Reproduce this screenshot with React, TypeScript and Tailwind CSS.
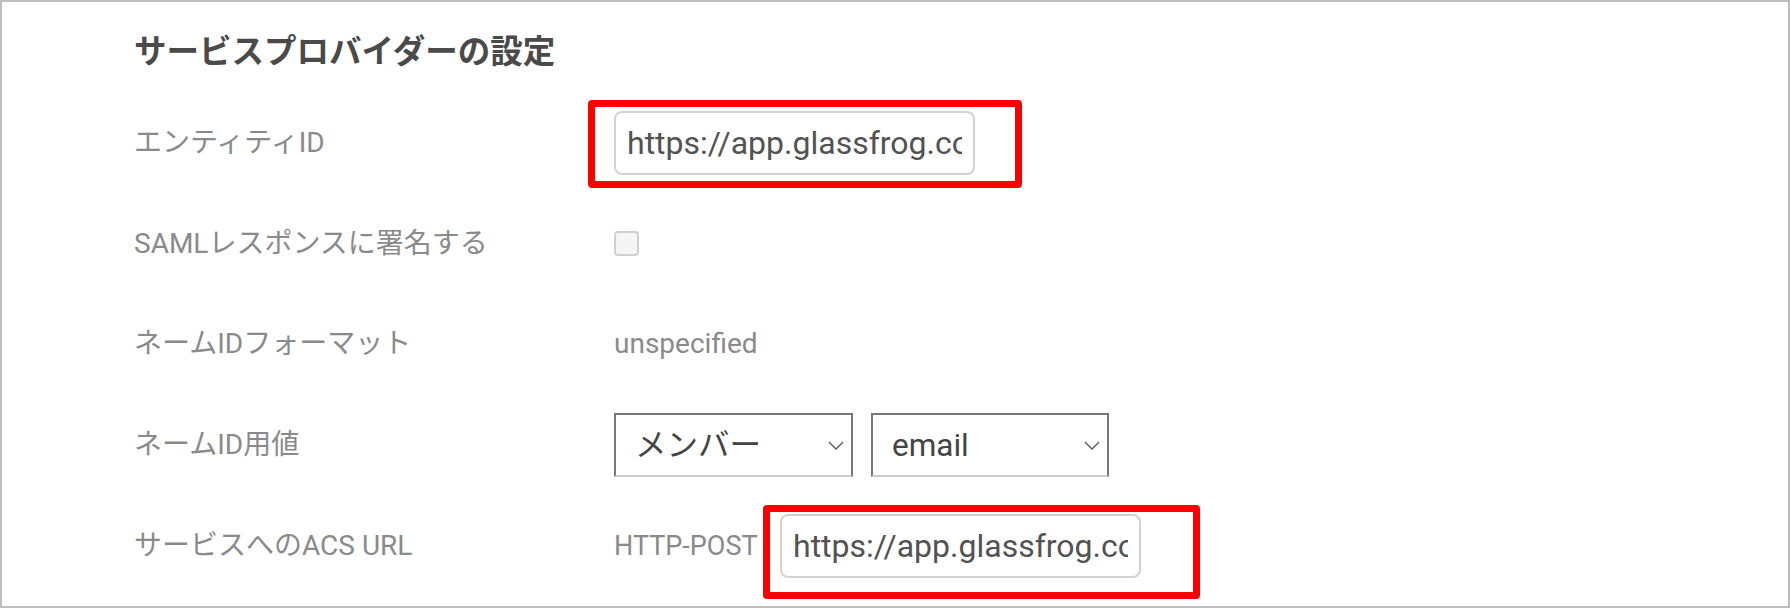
import React from "react";

const Chevron = () => (
  <svg width="16" height="9" viewBox="0 0 16 9" fill="none">
    <path d="M1 1 L8 8 L15 1" stroke="#555" strokeWidth="1.3" />
  </svg>
);

function Row({ label, children }: { label: string; children: React.ReactNode }) {
  return (
    <div className="flex h-[100.75px] items-center">
      <div className="w-[480px] text-[28px] leading-[36px] text-[#8a8a8a]">{label}</div>
      <div className="flex items-center">{children}</div>
    </div>
  );
}

function UrlInput() {
  return (
    <input
      readOnly
      value="https://app.glassfrog.com/saml/metadata"
      className="h-[64px] w-[361px] rounded-[8px] border-2 border-[#d2d2d2] bg-white px-[11px] text-[32px] text-[#525252] outline-none"
    />
  );
}

function Select({ text, width }: { text: string; width: string }) {
  return (
    <div
      className={`flex h-[64px] ${width} items-center justify-between border-2 border-[#787878] border-b-[#cccccc] pl-[19px] pr-[7px] text-[31.5px] text-[#444]`}
    >
      <span>{text}</span>
      <Chevron />
    </div>
  );
}

export default function App() {
  return (
    <div className="relative h-[608px] w-[1790px] overflow-hidden border-2 border-[#bdbdbd] bg-white pl-[132px] pt-[28px] font-[Roboto,'Noto_Sans_CJK_JP',sans-serif]">
      <h2 className="h-[44px] text-[32.5px] font-bold leading-[44px] text-[#4a4a4a]">
        サービスプロバイダーの設定
      </h2>
      <div className="mt-[18.6px] flex flex-col">
        <Row label="エンティティID">
          <div className="relative">
            <UrlInput />
            <div className="pointer-events-none absolute left-[-26px] top-[-11px] h-[88px] w-[434px] rounded-[4px] border-[7px] border-[#ff0000]" />
          </div>
        </Row>
        <Row label="SAMLレスポンスに署名する">
          <div className="h-[25px] w-[25px] rounded-[4px] border-2 border-[#d0d0d0] bg-[#f5f5f5]" />
        </Row>
        <Row label="ネームIDフォーマット">
          <span className="text-[28px] leading-[36px] text-[#8a8a8a]">unspecified</span>
        </Row>
        <Row label="ネームID用値">
          <div className="flex gap-[18px]">
            <Select text="メンバー" width="w-[239px]" />
            <Select text="email" width="w-[238px]" />
          </div>
        </Row>
        <Row label="サービスへのACS URL">
          <span className="w-[166px] text-[27px] leading-[36px] text-[#8a8a8a]">HTTP-POST</span>
          <div className="relative">
            <UrlInput />
            <div className="pointer-events-none absolute left-[-17px] top-[-9px] h-[94px] w-[437px] rounded-[4px] border-[7px] border-[#ff0000]" />
          </div>
        </Row>
      </div>
    </div>
  );
}
